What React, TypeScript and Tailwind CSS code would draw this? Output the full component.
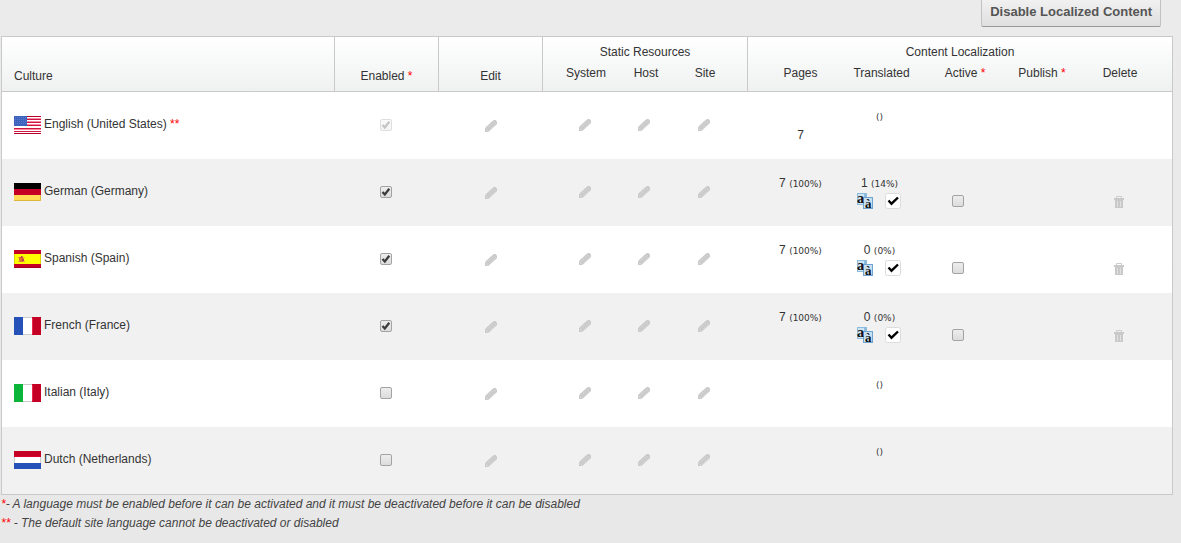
import type { ReactNode } from "react";

type FlagCode = "us" | "de" | "es" | "fr" | "it" | "nl";

interface Culture {
  flag: FlagCode;
  name: string;
  isDefault?: boolean;
  enabled: boolean;
  pages?: number;
  translated?: number;
  translatedPercent?: number;
}

const cultures: Culture[] = [
  { flag: "us", name: "English (United States)", isDefault: true, enabled: true, pages: 7 },
  { flag: "de", name: "German (Germany)", enabled: true, pages: 7, translated: 1, translatedPercent: 14 },
  { flag: "es", name: "Spanish (Spain)", enabled: true, pages: 7, translated: 0, translatedPercent: 0 },
  { flag: "fr", name: "French (France)", enabled: true, pages: 7, translated: 0, translatedPercent: 0 },
  { flag: "it", name: "Italian (Italy)", enabled: false },
  { flag: "nl", name: "Dutch (Netherlands)", enabled: false },
];

const flagShapes: Record<FlagCode, ReactNode> = {
  us: (
    <>
      <rect width="27" height="18" fill="#fff" />
      <path d="M0 .5h27M0 17.5h27" stroke="#b5002a" />
      <path d="M0 3.500h27M0 6.500h27M0 9.500h27M0 12.500h27M0 15.500h27" stroke="#cf1540" />
      <path d="M0 2.500h27M0 5.500h27M0 8.500h27M0 13.500h27" stroke="#f58aa2" />
      <rect width="13" height="10" fill="#3d62bd" />
      <path d="M1 1.5h12M1 3.5h12M1 5.5h12M1 7.5h12" stroke="#5a7bcb" strokeDasharray="1 1" />
    </>
  ),
  de: (
    <>
      <rect width="27" height="6" fill="#000" />
      <rect y="6" width="27" height="6" fill="#c40025" />
      <rect y="12" width="27" height="6" fill="#ffdb57" />
      <path d="M0 17.5h26.500V12" fill="none" stroke="#dcb93b" />
    </>
  ),
  es: (
    <>
      <rect width="27" height="18" fill="#c40025" />
      <rect y="4" width="27" height="10" fill="#ffff00" />
      <path d="M4 7.500h1M9.500 7.500h1M4 11.500h7" stroke="#e8a33a" />
      <path d="M5 7h4l1 2-1 3H6L5 10z" fill="#e0702f" />
      <path d="M7 6h1.500v2H7zM8 9h2v2H8z" fill="#b8405a" />
      <path d="M.5 4v10M26.500 4v10" stroke="#d9d400" />
      <path d="M0 17.500h27" stroke="#a3001f" />
    </>
  ),
  fr: (
    <>
      <rect width="27" height="18" fill="#fff" />
      <rect width="9" height="18" fill="#2551b8" />
      <rect x="18" width="9" height="18" fill="#c40025" />
      <path d="M9 .5h9M9 17.500h9" stroke="#ccc" />
      <path d="M18.500 1v16" stroke="#e8284b" />
    </>
  ),
  it: (
    <>
      <rect width="27" height="18" fill="#fff" />
      <rect width="9" height="18" fill="#0bb53a" />
      <rect x="18" width="9" height="18" fill="#c40025" />
      <path d="M9 .5h9M9 17.500h9" stroke="#ccc" />
      <path d="M18.500 1v16" stroke="#e8284b" />
    </>
  ),
  nl: (
    <>
      <rect width="27" height="18" fill="#fff" />
      <rect width="27" height="6" fill="#c40025" />
      <rect y="12" width="27" height="6" fill="#2551b8" />
      <path d="M.5 6v6M26.500 6v6" stroke="#ccc" />
      <path d="M1 5.500h25" stroke="#e00030" />
    </>
  ),
};

function Flag({ code }: { code: FlagCode }) {
  return (
    <svg width="27" height="18" viewBox="0 0 27 18" className="shrink-0" aria-hidden="true">
      {flagShapes[code]}
    </svg>
  );
}

function PencilButton({ label }: { label: string }) {
  return (
    <button type="button" aria-label={label} className="block mx-auto">
      <svg width="12" height="12" viewBox="0 0 12 12">
        <path d="M0 12V8.500L1 7l6.500-6L9 0h1.500L12 1.500V4l-1 1-6.500 6-1.500 1z" fill="#c9c9c9" />
        <path d="M2.500 8 7.800 3M4.500 9.800 9.500 5" stroke="#e4e4e4" strokeWidth="0.700" strokeDasharray="1.500 .5" />
        <path d="M8.500 1.800 10.800 4" stroke="#dedede" strokeWidth="0.700" />
        <path d="M1 9.500 2.800 11" stroke="#eee" strokeWidth="0.600" />
      </svg>
    </button>
  );
}

function TrashIcon() {
  return (
    <svg width="10" height="12" viewBox="0 0 10 12">
      <path d="M2.500 2.500v-2h5v2" fill="none" stroke="#cdcdcd" />
      <rect y="2" width="10" height="2" fill="#c9c9c9" />
      <rect x="1" y="4" width="8" height="8" fill="#c9c9c9" />
      <path d="M3.500 5v6M6.500 5v6" stroke="#e0e0e0" />
    </svg>
  );
}

function TranslateIcon() {
  return (
    <svg width="16" height="16" viewBox="0 0 16 16" className="overflow-visible">
      <rect width="10" height="12" fill="#8dbbdd" />
      <rect x="1" y="1" width="6" height="10" fill="#cfe5f4" />
      <rect x="6" y="4" width="10" height="12" fill="#6ea4cf" />
      <rect x="7" y="5" width="8" height="10" fill="#c6dff1" />
      <text x="0" y="10" fontFamily="Liberation Serif, serif" fontWeight="bold" fontSize="14" fill="#111">
        a
      </text>
      <text x="8" y="15" fontFamily="Liberation Serif, serif" fontWeight="bold" fontSize="13" fill="#111">
        à
      </text>
    </svg>
  );
}

function ReadyIcon() {
  return (
    <svg width="16" height="16" viewBox="0 0 16 16">
      <rect x=".5" y=".5" width="15" height="15" rx="2" fill="#fff" stroke="#dcdcdc" />
      <path d="m3.500 7.500 3 3.200L13 4.500" fill="none" stroke="#000" strokeWidth="2.400" />
    </svg>
  );
}

interface CheckBoxProps {
  label: string;
  checked?: boolean;
  disabled?: boolean;
}

function CheckBox({ label, checked = false, disabled = false }: CheckBoxProps) {
  return (
    <span className="grid w-3 h-3 mx-auto">
      <input
        type="checkbox"
        aria-label={label}
        defaultChecked={checked}
        disabled={disabled}
        className="peer col-start-1 row-start-1 appearance-none w-3 h-3 rounded-xs border border-[#a3a3a3] bg-linear-to-b from-[#ededed] to-[#dcdcdc] disabled:border-[#dedede] disabled:from-[#fafafa] disabled:to-[#f5f5f5]"
      />
      <svg
        viewBox="0 0 12 12"
        className="pointer-events-none col-start-1 row-start-1 w-3 h-3 invisible peer-checked:visible text-[#3c3c3c] peer-disabled:text-[#c4c4c4]"
      >
        <path d="m2.500 6 2.300 2.500L9.300 2.800" fill="none" stroke="currentColor" strokeWidth="2.300" />
      </svg>
    </span>
  );
}

function Required({ children = "*" }: { children?: string }) {
  return <span className="text-[#ff0000]">{children}</span>;
}

function Small({ children }: { children: ReactNode }) {
  return <span className="font-['DejaVu_Sans',Verdana,sans-serif] text-[9px]">{children}</span>;
}

function CultureRow({ culture }: { culture: Culture }) {
  const { name, enabled, isDefault, pages, translated, translatedPercent } = culture;
  const localized = translated !== undefined;

  return (
    <tr className="h-[67px] bg-white even:bg-[#f1f1f1]">
      <td className="pl-3 pb-0.5">
        <div className="flex items-center gap-[3px]">
          <Flag code={culture.flag} />
          <span className="pb-0.5">
            {name} {isDefault && <Required>**</Required>}
          </span>
        </div>
      </td>
      <td className="pr-0.5 pb-0.5">
        <CheckBox label={`Enable ${name}`} checked={enabled} disabled={isDefault} />
      </td>
      <td>
        <PencilButton label={`Edit ${name}`} />
      </td>
      <td className="pl-3 pb-0.5">
        <PencilButton label={`Edit system resources for ${name}`} />
      </td>
      <td className="pr-0.5 pb-0.5">
        <PencilButton label={`Edit host resources for ${name}`} />
      </td>
      <td className="pr-3.5 pb-0.5">
        <PencilButton label={`Edit site resources for ${name}`} />
      </td>
      <td className="align-top pt-4 pl-3 text-center leading-4">
        {pages !== undefined && (
          <div className={isDefault ? "pt-[19px]" : ""}>
            {pages} {!isDefault && <Small>(100%)</Small>}
          </div>
        )}
      </td>
      <td className="align-top pt-4 pr-1 text-center leading-4">
        <div className="h-4">
          {translated} <Small>({localized && `${translatedPercent}%`})</Small>
        </div>
        {localized && (
          <div className="flex items-center justify-center gap-3 pt-0.5 pr-0.5">
            <button type="button" aria-label={`Translate pages to ${name}`}>
              <TranslateIcon />
            </button>
            <button type="button" aria-label={`Mark ${name} pages as translated`}>
              <ReadyIcon />
            </button>
          </div>
        )}
      </td>
      <td className="align-top pt-9 pr-2">{localized && <CheckBox label={`Activate ${name}`} />}</td>
      <td />
      <td className="align-top pt-[37px] pr-4">
        {localized && (
          <button type="button" aria-label={`Delete ${name}`} className="block mx-auto">
            <TrashIcon />
          </button>
        )}
      </td>
    </tr>
  );
}

export default function App() {
  return (
    <main className="min-h-screen bg-linear-to-b from-[#ebebeb] to-[#e8e8e8] font-['Liberation_Sans',Arial,sans-serif] text-[12px] text-[#333]">
      <div className="flex justify-end pr-5 pb-[9px]">
        <button
          type="button"
          className="px-2 pt-0.5 pb-1 leading-5 rounded-b-xs border border-t-0 border-[#c2c2c2] border-b-[#999] bg-linear-to-b from-[#f1f1f1] to-[#dfdfdf] text-[13px] font-bold text-[#555]"
        >
          Disable Localized Content
        </button>
      </div>

      <div className="pl-px pr-2">
        <table className="w-full table-fixed border-separate border-spacing-0 border border-[#c9c9c9]">
          <colgroup>
            <col />
            <col className="w-[104px]" />
            <col className="w-[104px]" />
            <col className="w-[72px]" />
            <col className="w-[60px]" />
            <col className="w-[73px]" />
            <col className="w-[93px]" />
            <col className="w-[81px]" />
            <col className="w-[80px]" />
            <col className="w-[80px]" />
            <col className="w-[90px]" />
          </colgroup>
          <thead className="bg-linear-to-b from-white to-[#eff1f1] [&_th]:font-normal">
            <tr className="h-[26px]">
              <th rowSpan={2} scope="col" className="align-bottom text-left pl-3 pb-[7px] leading-4 border-r border-b border-[#c9c9c9]">
                Culture
              </th>
              <th rowSpan={2} scope="col" className="align-bottom pb-[7px] leading-4 border-r border-b border-[#c9c9c9]">
                Enabled <Required />
              </th>
              <th rowSpan={2} scope="col" className="align-bottom pb-[7px] leading-4 border-r border-b border-[#c9c9c9]">
                Edit
              </th>
              <th colSpan={3} scope="colgroup" className="align-top pt-[7px] leading-4 border-r border-[#c9c9c9]">
                Static Resources
              </th>
              <th colSpan={5} scope="colgroup" className="align-top pt-[7px] leading-4">
                Content Localization
              </th>
            </tr>
            <tr className="h-[29px] [&>th]:align-top [&>th]:pt-0.5 [&>th]:leading-4 [&>th]:border-b [&>th]:border-[#c9c9c9]">
              <th scope="col" className="pl-3.5">System</th>
              <th scope="col" className="pl-0.5">Host</th>
              <th scope="col" className="pr-3 border-r">Site</th>
              <th scope="col" className="pl-3">Pages</th>
              <th scope="col">Translated</th>
              <th scope="col" className="pl-1.5">
                Active <Required />
              </th>
              <th scope="col">
                Publish <Required />
              </th>
              <th scope="col" className="pr-3.5">Delete</th>
            </tr>
          </thead>
          <tbody>
            {cultures.map((culture) => (
              <CultureRow key={culture.flag} culture={culture} />
            ))}
          </tbody>
        </table>
      </div>

      <div className="pl-px italic leading-[19px] text-[#444]">
        <p>
          <Required />- A language must be enabled before it can be activated and it must be deactivated before it can be disabled
        </p>
        <p>
          <Required>**</Required> - The default site language cannot be deactivated or disabled
        </p>
      </div>
    </main>
  );
}
